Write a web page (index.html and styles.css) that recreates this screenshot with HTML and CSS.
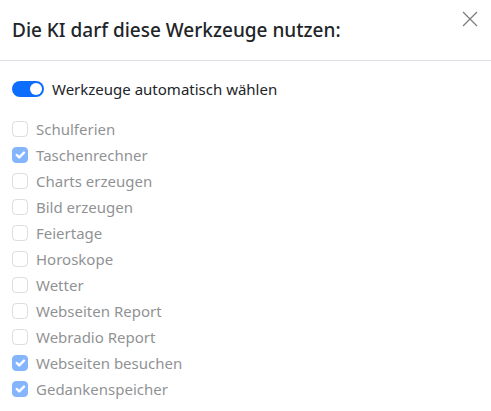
FILE: index.html
```html
<!DOCTYPE html>
<html lang="de">
<head>
  <meta charset="UTF-8">
  <title>Werkzeuge</title>
  <link rel="stylesheet" href="styles.css">
</head>
<body>
  <div class="modal">
    <div class="modal-header">
      <h5 class="modal-title">Die KI darf diese Werkzeuge nutzen:</h5>
      <button class="btn-close" aria-label="Schließen">
        <svg width="16" height="16" viewBox="0 0 16 16"><path d="M1 1 L15 15 M15 1 L1 15" stroke="#000" stroke-width="1.3" fill="none"/></svg>
      </button>
    </div>
    <div class="modal-body">
      <div class="switch-row">
        <span class="switch"><span class="knob"></span></span>
        <span class="switch-label">Werkzeuge automatisch wählen</span>
      </div>
      <div class="tool-list" id="tools"></div>
    </div>
  </div>

  <script>
    const tools = [
      ["Schulferien", false],
      ["Taschenrechner", true],
      ["Charts erzeugen", false],
      ["Bild erzeugen", false],
      ["Feiertage", false],
      ["Horoskope", false],
      ["Wetter", false],
      ["Webseiten Report", false],
      ["Webradio Report", false],
      ["Webseiten besuchen", true],
      ["Gedankenspeicher", true]
    ];
    const list = document.getElementById("tools");
    tools.forEach(([name, checked]) => {
      const row = document.createElement("div");
      row.className = "form-check";
      const box = document.createElement("span");
      box.className = checked ? "check-box checked" : "check-box";
      if (checked) {
        box.innerHTML = '<svg width="16" height="16" viewBox="0 0 20 20"><path d="M6 10l3 3 6-6" stroke="#fff" stroke-width="3" fill="none" stroke-linecap="round" stroke-linejoin="round"/></svg>';
      }
      const label = document.createElement("span");
      label.className = "check-label";
      label.textContent = name;
      row.appendChild(box);
      row.appendChild(label);
      list.appendChild(row);
    });
  </script>
</body>
</html>
```
FILE: styles.css
```css
body {
  margin: 0;
  background: #fff;
  font-family: "Noto Sans", "Open Sans", sans-serif;
  color: #212529;
}
.modal {
  width: 491px;
}
.modal-header {
  display: flex;
  align-items: center;
  justify-content: space-between;
  height: 61px;
  box-sizing: border-box;
  padding: 0 12px;
  border-bottom: 1px solid #dee2e6;
}
.modal-title {
  margin: 0;
  font-size: 19px;
  font-weight: 500;
  line-height: 28px;
}
.btn-close {
  border: none;
  background: none;
  padding: 0;
  margin-top: -23px;
  margin-right: 1px;
  opacity: .5;
  cursor: pointer;
  display: flex;
}
.modal-body {
  padding: 16px 12px;
}
.switch-row {
  display: flex;
  align-items: center;
  gap: 8px;
  height: 24px;
  margin-bottom: 16px;
}
.switch {
  width: 32px;
  height: 16px;
  border-radius: 8px;
  background: #0d6efd;
  display: flex;
  justify-content: flex-end;
  align-items: center;
  padding: 0 2px;
  box-sizing: border-box;
}
.knob {
  width: 12px;
  height: 12px;
  border-radius: 50%;
  background: #fff;
}
.switch-label {
  font-size: 15px;
}
.form-check {
  display: flex;
  align-items: center;
  gap: 8px;
  height: 24px;
  margin-bottom: 2px;
  opacity: .5;
}
.check-box {
  width: 16px;
  height: 16px;
  box-sizing: border-box;
  border: 1px solid rgba(0, 0, 0, .25);
  border-radius: 4px;
  display: flex;
}
.check-box.checked {
  background: #0d6efd;
  border-color: #0d6efd;
  justify-content: center;
  align-items: center;
}
.check-box.checked svg {
  flex: none;
}
.check-label {
  font-size: 15px;
}
```
